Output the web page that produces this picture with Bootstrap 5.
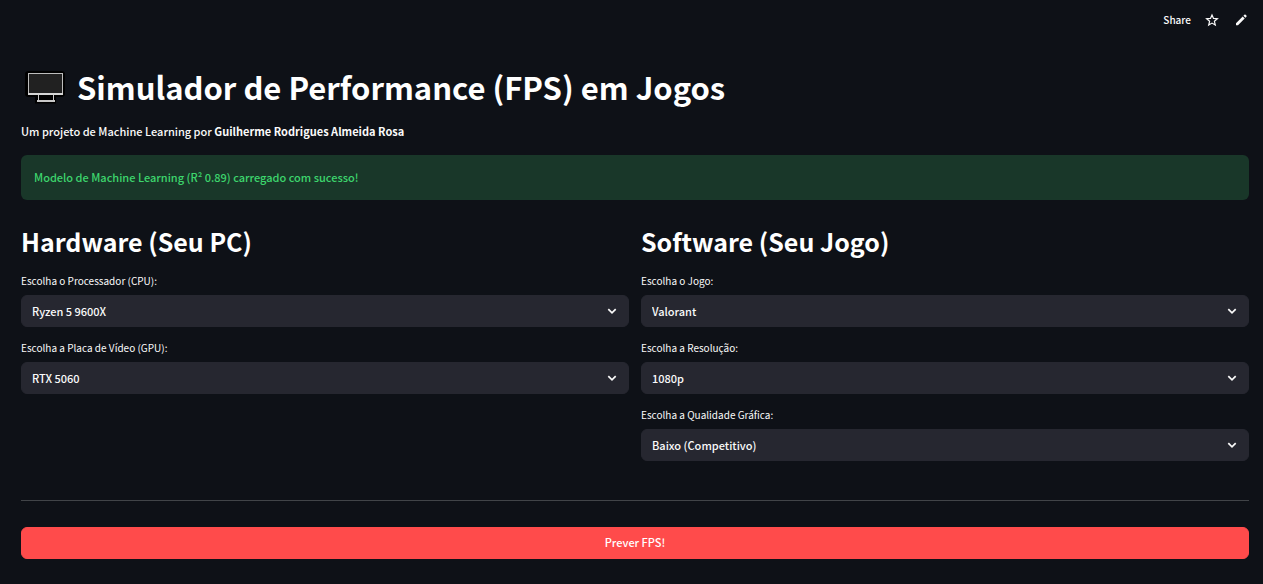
<!DOCTYPE html>
<html lang="pt-BR" data-bs-theme="dark">
<head>
<meta charset="utf-8">
<meta name="viewport" content="width=device-width, initial-scale=1">
<title>Simulador de Performance (FPS) em Jogos</title>
<link href="https://cdn.jsdelivr.net/npm/bootstrap@5.3.0/dist/css/bootstrap.min.css" rel="stylesheet">
<style>
body { background: #0e1117; color: #fafafa; font-family: "Noto Sans CJK JP", "Noto Sans", sans-serif; font-size: 11px; font-weight: 500; line-height: 20px; }
.toolbar { height: 40px; padding-right: 14px; gap: 13px; }
.tool { color: #fafafa; font-size: 10px; font-weight: 500; line-height: 16px; }
.page { padding: 26px 14px 24px 21px; }
.page-title { font-size: 31px; line-height: 42px; font-weight: 700; gap: 8px; margin-bottom: 13px; }
.notice { background: #193729; color: #3dd56d; border-radius: 6px; padding: 12px 13px; line-height: 21px; margin: 14px 0 23px; }
.section-title { font-size: 25px; line-height: 36px; font-weight: 700; margin-bottom: 13px; }
.field-label { font-size: 10px; font-weight: 400; line-height: 18px; margin-bottom: 5px; }
.field { margin-bottom: 12px; }
.field .form-select { background-image: url("data:image/svg+xml,%3Csvg xmlns='http://www.w3.org/2000/svg' viewBox='0 0 10 10'%3E%3Cpath fill='none' stroke='%23fafafa' stroke-width='1.7' d='M1.300 3.200L5 6.900l3.700-3.700'/%3E%3C/svg%3E"); height: 32px; padding: 0 36px 0 10px; border: 1px solid #262730; border-radius: 6px; background-color: #262730; background-position: right 11px center; background-size: 10px 10px; color: #fafafa; font-size: 11px; font-weight: 500; line-height: 20px; }
.rule { border-color: #fafafa; opacity: .22; margin: 27px 0 26px; }
.predict { height: 32px; border-radius: 6px; --bs-btn-bg: #ff4b4b; --bs-btn-color: #fff; --bs-btn-border-color: #ff4b4b; --bs-btn-hover-bg: #ff3333; --bs-btn-hover-color: #fff; padding: 0 0 2px; font-size: 11px; font-weight: 500; line-height: 20px; }
</style>
</head>
<body>
<header class="toolbar d-flex justify-content-end align-items-center">
  <button type="button" class="tool btn p-0 border-0">Share</button>
  <button type="button" class="tool btn p-0 border-0 d-flex" aria-label="Favorite">
    <svg width="16" height="16" viewBox="0 0 16 16" fill="none" stroke="currentColor" stroke-width="1.2"><path d="M8 2.900l1.500 3.500 3.900.3-3 2.600.9 3.800L8 11.100l-3.300 2 .9-3.800-3-2.600 3.900-.3z"/></svg>
  </button>
  <button type="button" class="tool btn p-0 border-0 d-flex" aria-label="Edit">
    <svg width="16" height="16" viewBox="0 0 16 16" fill="currentColor"><path d="M3 11.200 9.700 4.500l2 2L5 13.200H3zM10.400 3.800l1-1c.4-.4.8-.4 1.200 0l.8.8c.4.400.4.800 0 1.200l-1 1z"/></svg>
  </button>
</header>
<main class="page">
  <h1 class="page-title d-flex align-items-center">
    <svg width="48" height="36" viewBox="0 0 48 36" aria-hidden="true"><path d="M8 2h32q4 0 4 3v20q0 3-4 3h-5v6.500H14V28H8q-4 0-4-3V5q0-3 4-3z" fill="#000"/><path d="M7 4h35v22H7z" fill="#bdbdbd"/><path d="M8 5h33v19H8z" fill="#212121"/><path d="M7 24h35v2H7z" fill="#d5d5d5"/><path d="M17 26h1v5h14v-5h1v5h1v2H16v-2h1z" fill="#c8c8c8"/></svg>
    <span>Simulador de Performance (FPS) em Jogos</span>
  </h1>
  <p class="mb-0">Um projeto de Machine Learning por <strong>Guilherme Rodrigues Almeida Rosa</strong></p>
  <div class="notice" role="status">Modelo de Machine Learning (R² 0.89) carregado com sucesso!</div>
  <div class="row" style="--bs-gutter-x: 12px">
    <section class="col-6">
      <h2 class="section-title">Hardware (Seu PC)</h2>
      <div class="field"><label class="field-label d-block" for="cpu">Escolha o Processador (CPU):</label>
        <select class="form-select" id="cpu"><option>Ryzen 5 9600X</option></select></div>
      <div class="field"><label class="field-label d-block" for="gpu">Escolha a Placa de Vídeo (GPU):</label>
        <select class="form-select" id="gpu"><option>RTX 5060</option></select></div>
    </section>
    <section class="col-6">
      <h2 class="section-title">Software (Seu Jogo)</h2>
      <div class="field"><label class="field-label d-block" for="game">Escolha o Jogo:</label>
        <select class="form-select" id="game"><option>Valorant</option></select></div>
      <div class="field"><label class="field-label d-block" for="res">Escolha a Resolução:</label>
        <select class="form-select" id="res"><option>1080p</option></select></div>
      <div class="field"><label class="field-label d-block" for="quality">Escolha a Qualidade Gráfica:</label>
        <select class="form-select" id="quality"><option>Baixo (Competitivo)</option></select></div>
    </section>
  </div>
  <hr class="rule">
  <button type="button" class="predict btn w-100">Prever FPS!</button>
</main>
<script src="https://cdn.jsdelivr.net/npm/bootstrap@5.3.0/dist/js/bootstrap.bundle.min.js"></script>
</body>
</html>
